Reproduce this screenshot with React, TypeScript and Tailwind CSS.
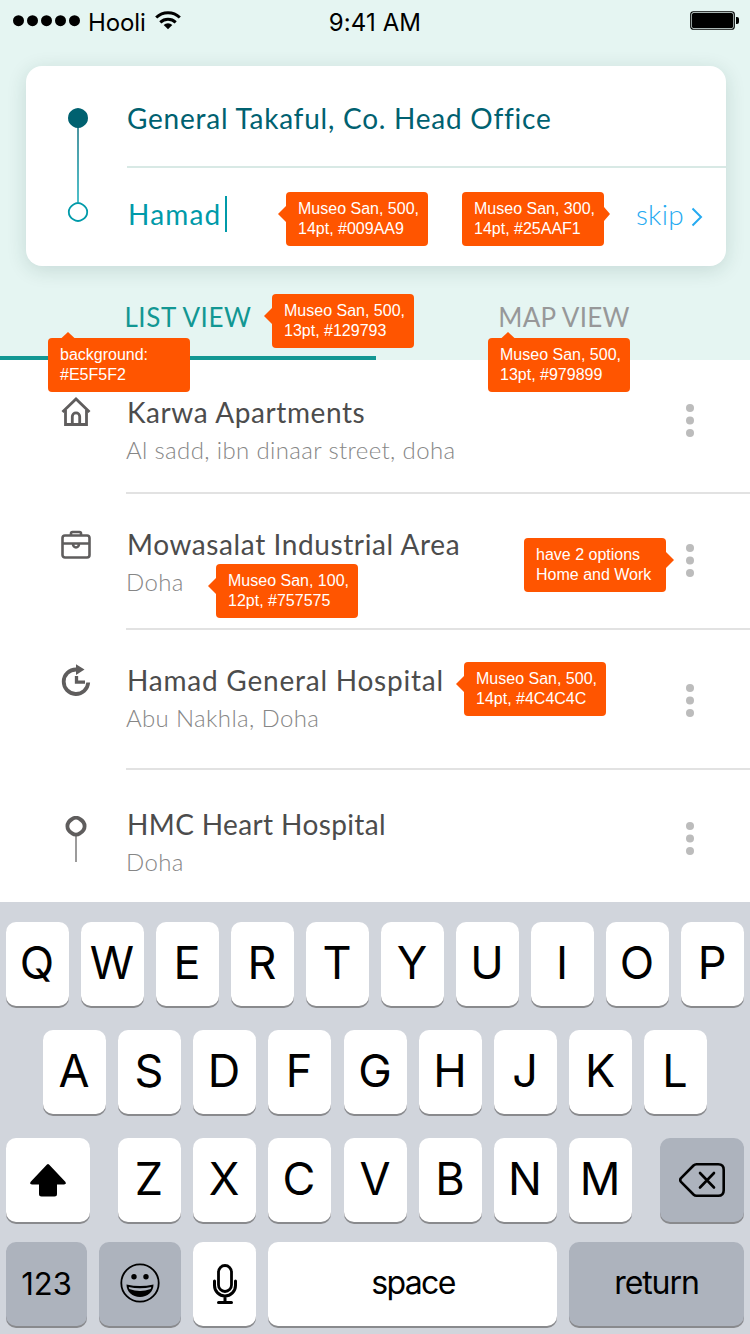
import type { ReactNode } from "react";

type Arrow = "left" | "right" | "rightShort" | "top";

const arrowPaths: Record<Arrow, { box: string; size: [number, number]; d: string }> = {
  left: { box: "-left-2 top-[14px]", size: [9, 16], d: "M9 0L8 0L0 8L8 16H9Z" },
  right: { box: "-right-2 top-[14px]", size: [9, 16], d: "M0 0H1L9 8L1 16H0Z" },
  rightShort: { box: "-right-[6px] top-[15px]", size: [7, 14], d: "M0 0H1L7 7L1 14H0Z" },
  top: { box: "-top-[6px] left-[13px]", size: [14, 7], d: "M0 7V6.500L7 0L14 6.500V7Z" },
};

function Note({ place, arrow, lines }: { place: string; arrow: Arrow; lines: [string, string] }) {
  const a = arrowPaths[arrow];
  return (
    <div
      className={`absolute z-10 h-[54px] w-[142px] rounded bg-[#ff5500] pt-[7px] pl-3 font-['Liberation_Sans',sans-serif] text-base leading-5 whitespace-nowrap text-white ${place}`}
    >
      <svg className={`absolute ${a.box}`} width={a.size[0]} height={a.size[1]}>
        <path d={a.d} fill="#ff5500" />
      </svg>
      <div>{lines[0]}</div>
      <div>{lines[1]}</div>
    </div>
  );
}

function StatusBar() {
  return (
    <div className="grid h-10 grid-cols-3 items-start font-['Inter',sans-serif] text-2xl leading-[29px] text-black">
      <div className="flex pl-[13px]">
        <svg width="68" height="12" className="mt-[15px]">
          {[5.5, 19.5, 33.5, 47.5, 61.5].map((x) => (
            <circle key={x} cx={x} cy="5.700" r="5.500" />
          ))}
        </svg>
        <span className="mt-[8px] ml-[7px] tracking-[-0.1px]">Hooli</span>
        <svg width="26" height="19" viewBox="0 0 26 19" className="mt-[10.500px] ml-[9px]">
          <g fill="none" stroke="#000" strokeWidth="3">
            <path d="M1.200 6.500A17 17 0 0 1 24.800 6.500" />
            <path d="M5.300 11.300A11.200 11.200 0 0 1 20.700 11.300" />
          </g>
          <path d="M13 18.300L8.700 14A6 6 0 0 1 17.300 14Z" />
        </svg>
      </div>
      <div className="mt-[8px] text-center tracking-[0.1px]">9:41 AM</div>
      <svg width="50" height="20" className="mt-[11px] mr-[10px] justify-self-end">
        <rect x="0.750" y="0.750" width="43.500" height="17.500" rx="2.500" fill="none" stroke="#000" strokeWidth="1.200" />
        <rect x="2" y="2" width="41" height="15" rx="1.500" />
        <path d="M46 6h1a2 2 0 0 1 2 2v3a2 2 0 0 1-2 2h-1z" />
      </svg>
    </div>
  );
}

function TripCard() {
  return (
    <div className="relative mr-6 mt-[26px] ml-[26px] flex h-[200px] rounded-2xl bg-white shadow-[0_4px_20px_rgba(0,60,50,0.14)]">
      <svg width="100" height="200" viewBox="0 0 100 200" className="shrink-0">
        <defs>
          <linearGradient id="route" x1="0" y1="0" x2="0" y2="1">
            <stop offset="0" stopColor="#006778" />
            <stop offset="1" stopColor="#00a4b2" />
          </linearGradient>
        </defs>
        <rect x="51.300" y="60" width="1.400" height="76" fill="url(#route)" />
        <path d="M52 42q2.500 0 5 1.600q5 3 5 8.400t-5 8.400q-2.500 1.600-5 1.600t-5-1.600q-5-3-5-8.400t5-8.400q2.500-1.600 5-1.600z" fill="#006170" />
        <path d="M52 137q2.300 0 4.500 1.400q4.700 2.800 4.700 7.600t-4.700 7.600q-2.200 1.400-4.500 1.400t-4.500-1.400q-4.700-2.800-4.700-7.600t4.700-7.600q2.200-1.400 4.500-1.400z" fill="#fff" stroke="#009aa9" strokeWidth="1.800" />
      </svg>
      <div className="flex grow flex-col pl-px font-['Lato',sans-serif] text-[28px] font-normal">
        <div className="flex h-[102px] items-center border-b-2 border-[#d8e9e5] pt-[3px]">
          <span className="tracking-[0.760px] text-[#006170]">General Takaful, Co. Head Office</span>
        </div>
        <div className="flex h-[98px] items-center pr-[23px] pb-[6px]">
          <span className="ml-px tracking-[1.200px] text-[#009aa9]">Hamad</span>
          <span className="ml-[3px] h-9 w-0.5 bg-[#009aa9]" />
          <span className="ml-auto font-light tracking-[0.3px] text-[#25aaf1]">skip</span>
          <svg width="12" height="20" viewBox="0 0 12 20" className="mt-[5px] ml-[7px]" fill="none" stroke="#25aaf1" strokeWidth="2">
            <path d="M1.500 1.500L10 10L1.500 18.500" />
          </svg>
        </div>
      </div>
      <Note place="left-[260px] top-[126px]" arrow="left" lines={["Museo San, 500,", "14pt, #009AA9"]} />
      <Note place="left-[436px] top-[126px]" arrow="rightShort" lines={["Museo San, 300,", "14pt, #25AAF1"]} />
    </div>
  );
}

function Tabs() {
  return (
    <div className="mt-[18px] grid h-[76px] grid-cols-2 text-center font-['Lato',sans-serif] text-[26px] leading-8 font-normal">
      <div className="w-[376px] border-b-4 border-[#129793] pt-[17px] tracking-[0.600px] text-[#129793]">LIST VIEW</div>
      <div className="pt-[17px] pl-[3px] tracking-[0.300px] text-[#979899]">MAP VIEW</div>
    </div>
  );
}

const HomeIcon = (
  <svg width="30" height="30" viewBox="0 0 30 30" fill="none" stroke="#5f5d5d" strokeWidth="2.800">
    <path d="M1.500 15L15 2L28.500 15" />
    <path d="M4.500 13V27.500H25.500V13" />
    <path d="M11.300 27V19.500a3.700 3.700 0 0 1 7.400 0V27" />
  </svg>
);

const WorkIcon = (
  <svg width="30" height="30" viewBox="0 0 30 30" fill="none" stroke="#5f5d5d" strokeWidth="2.600">
    <rect x="1.500" y="5.500" width="27" height="22" rx="2.500" />
    <path d="M10 5V3.500a1.500 1.500 0 0 1 1.500-1.500h7a1.500 1.500 0 0 1 1.500 1.500V5M2 13.500H28M12 14a3 3.500 0 0 0 6 0" />
  </svg>
);

const RecentIcon = (
  <svg width="30" height="32" viewBox="0 0 30 32">
    <path d="M16 5.500H15A12.250 12.250 0 1 0 27.200 18.500" fill="none" stroke="#5f5d5d" strokeWidth="3.800" />
    <path d="M15 0.300L23.500 5.600L15 11Z" fill="#5f5d5d" />
    <path d="M15.500 12V18.200H24" fill="none" stroke="#5f5d5d" strokeWidth="3.300" />
  </svg>
);

const PinIcon = (
  <svg width="30" height="48" viewBox="0 0 30 48">
    <rect x="14.100" y="20" width="1.800" height="26" fill="#929191" />
    <path d="M15 1.700q2 0 3.800 1.300q4.800 2.900 4.800 7.200t-4.800 7.200q-1.800 1.300-3.800 1.300t-3.800-1.300q-4.800-2.900-4.800-7.200t4.800-7.200q1.800-1.300 3.800-1.300z" fill="#fff" stroke="#5f5d5d" strokeWidth="3.800" />
  </svg>
);

interface Place {
  icon: ReactNode;
  title: string;
  titleSpacing: string;
  address: string;
  row: string;
  iconTop: string;
  dotsTop: string;
}

const places: Place[] = [
  { icon: HomeIcon, title: "Karwa Apartments", titleSpacing: "tracking-[0.600px]", address: "Al sadd, ibn dinaar street, doha", row: "h-[134px] pt-[35px]", iconTop: "mt-[2px]", dotsTop: "mt-[9px]" },
  { icon: WorkIcon, title: "Mowasalat Industrial Area", titleSpacing: "tracking-[0.600px]", address: "Doha", row: "h-[136px] pt-[33px]", iconTop: "mt-[3px]", dotsTop: "mt-[17px]" },
  { icon: RecentIcon, title: "Hamad General Hospital", titleSpacing: "tracking-[0.780px]", address: "Abu Nakhla, Doha", row: "h-[140px] pt-[33px]", iconTop: "mt-px", dotsTop: "mt-[21px]" },
  { icon: PinIcon, title: "HMC Heart Hospital", titleSpacing: "tracking-[0.380px]", address: "Doha", row: "h-[132px] pt-[37px]", iconTop: "mt-[9px]", dotsTop: "mt-[15px]" },
];

function PlaceList() {
  return (
    <div className="relative h-[542px] bg-white font-['Lato',sans-serif]">
      {places.map((p, i) => (
        <div key={p.title} className={`relative flex items-start pr-[56px] pl-[61px] ${p.row}`}>
          <div className={`w-[30px] shrink-0 ${p.iconTop}`}>{p.icon}</div>
          <div className="ml-[35px] grow whitespace-nowrap">
            <div className={`pl-px text-[28px] leading-[34px] font-normal text-[#4c4c4c] ${p.titleSpacing}`}>{p.title}</div>
            <div className="mt-[6px] text-2xl leading-[30px] font-light tracking-[0.360px] text-[#868686]">{p.address}</div>
          </div>
          <svg width="8" height="34" className={p.dotsTop} fill="#bcbcbc">
            <circle cx="4" cy="4" r="4" />
            <circle cx="4" cy="16.500" r="4" />
            <circle cx="4" cy="29" r="4" />
          </svg>
          {i < places.length - 1 && <div className="absolute right-0 bottom-0 left-[126px] h-0.5 bg-[#e2e2e2]" />}
        </div>
      ))}
      <Note place="left-[216px] top-[204px]" arrow="left" lines={["Museo San, 100,", "12pt, #757575"]} />
      <Note place="left-[524px] top-[178px]" arrow="right" lines={["have 2 options", "Home and Work"]} />
      <Note place="left-[464px] top-[302px]" arrow="left" lines={["Museo San, 500,", "14pt, #4C4C4C"]} />
    </div>
  );
}

function Key({ children, width = "w-[63px]", dark = false, text = "text-[45px] pb-[3px] pr-px" }: { children: ReactNode; width?: string; dark?: boolean; text?: string }) {
  return (
    <div
      className={`flex h-[84px] shrink-0 items-center justify-center rounded-[10px] shadow-[0_2px_0_#898a8d] ${width} ${text} ${dark ? "bg-[#adb3bd]" : "bg-white"}`}
    >
      {children}
    </div>
  );
}

function Letters({ keys }: { keys: string }) {
  return (
    <>
      {keys.split("").map((k) => (
        <Key key={k}>{k}</Key>
      ))}
    </>
  );
}

function Keyboard() {
  return (
    <div className="flex h-[432px] flex-col bg-[#d1d5dc] px-[6px] pt-5 font-['Inter',sans-serif] leading-none text-black">
      <div className="flex gap-3">
        <Letters keys="QWERTYUIOP" />
      </div>
      <div className="mt-6 flex justify-center gap-[13px]">
        <div className="flex gap-3">
          <Letters keys="ASDF" />
        </div>
        <div className="flex gap-3">
          <Letters keys="GHJKL" />
        </div>
      </div>
      <div className="mt-6 flex justify-between">
        <Key width="w-[84px]" text="">
          <svg width="36" height="34" viewBox="0 0 36 34">
            <path d="M17 1.500Q18 .5 19 1.500L35.300 18.700Q37 21.500 34 21.500H27V31Q27 33.500 24.500 33.500H11.500Q9 33.500 9 31V21.500H2Q-1 21.500 .7 18.700Z" />
          </svg>
        </Key>
        <div className="flex gap-[13px]">
          <div className="flex gap-3">
            <Letters keys="ZXC" />
          </div>
          <div className="flex gap-3">
            <Letters keys="VBNM" />
          </div>
        </div>
        <Key width="w-[84px]" dark text="">
          <svg width="46" height="34" viewBox="0 0 46 34" fill="none" stroke="#000" strokeWidth="2.600" strokeLinecap="round" strokeLinejoin="round">
            <path d="M17.500 1.300H39.200Q44.700 1.300 44.700 6.800V27.200Q44.700 32.700 39.200 32.700H17.500Q15.800 32.700 14.500 31.500L2 18.800Q.4 17 2 15.200L14.500 2.500Q15.800 1.300 17.500 1.300Z" />
            <path d="M21 10L35 24.500M35 10L21 24.500" />
          </svg>
        </Key>
      </div>
      <div className="mt-5 flex gap-3">
        <Key width="w-[81px]" dark text="text-[31px] pb-[2px]">
          123
        </Key>
        <Key width="w-[82px]" dark text="pb-[2px]">
          <svg width="40" height="40" viewBox="0 0 40 40">
            <circle cx="20" cy="20" r="18.700" fill="none" stroke="#000" strokeWidth="1.800" />
            <circle cx="14" cy="13.800" r="2.700" />
            <circle cx="26" cy="13.800" r="2.700" />
            <path d="M6.500 21.500Q20 24.500 33.500 21.500C33.500 29 27.500 34 20 34S6.500 29 6.500 21.500Z" />
            <path d="M8.700 24Q20 26.500 31.300 24L30.700 26Q20 30 9.300 26Z" fill="#adb3bd" />
          </svg>
        </Key>
        <Key text="">
          <svg width="26" height="42" viewBox="0 0 26 42" fill="none" stroke="#000" strokeWidth="3" strokeLinecap="round">
            <rect x="6.500" y="2.500" width="13" height="26" rx="6.500" strokeWidth="2.800" />
            <path d="M2.500 18V22.500a10.500 10.500 0 0 0 21 0V18M13 33V39.500M6.500 39.500H19.500" />
          </svg>
        </Key>
        <Key width="w-[289px]" text="text-[32px] pb-[3px] pl-[1px] tracking-[-1.600px]">
          space
        </Key>
        <Key width="w-[175px]" dark text="text-[32px] pb-[3px] tracking-[-1.100px]">
          return
        </Key>
      </div>
    </div>
  );
}

export default function App() {
  return (
    <div className="relative flex h-[1334px] w-[750px] flex-col overflow-hidden bg-white antialiased">
      <header className="h-[360px] bg-[#e5f5f2]">
        <StatusBar />
        <TripCard />
        <Tabs />
      </header>
      <PlaceList />
      <Keyboard />
      <Note place="left-[272px] top-[294px]" arrow="left" lines={["Museo San, 500,", "13pt, #129793"]} />
      <Note place="left-[48px] top-[338px]" arrow="top" lines={["background:", "#E5F5F2"]} />
      <Note place="left-[488px] top-[338px]" arrow="top" lines={["Museo San, 500,", "13pt, #979899"]} />
    </div>
  );
}
